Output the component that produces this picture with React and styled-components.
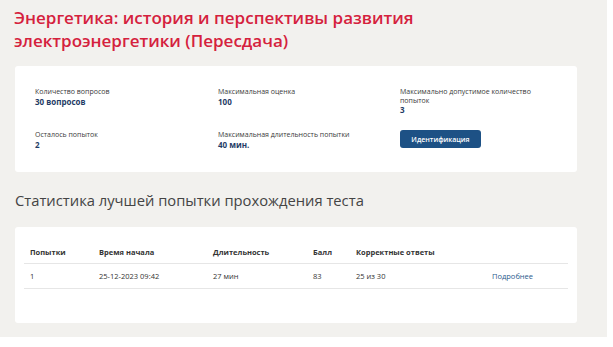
import React from "react";
import styled, { createGlobalStyle } from "styled-components";

const Global = createGlobalStyle`
  html, body { margin: 0; padding: 0; background: #ffffff; }
  body { font-family: "Open Sans", "Noto Sans", sans-serif; }
  * { box-sizing: border-box; }
`;

const Page = styled.div`
  width: 607px;
  height: 337px;
  background: #f2f1ee;
  padding: 6px 30px 0 15px;
  overflow: hidden;
`;

const Title = styled.h1`
  margin: 0 0 14px -1px;
  font-size: 17px;
  line-height: 23px;
  font-weight: 600;
  color: #d5213d;
`;

const Card = styled.section`
  background: #ffffff;
  border-radius: 3px;
  padding: ${(p) => p.$pad};
`;

const InfoGrid = styled.div`
  display: grid;
  grid-template-columns: 183px 182px 160px;
  row-gap: 17px;
  align-items: start;
`;

const Cell = styled.div`
  display: flex;
  flex-direction: column;
`;

const Label = styled.span`
  font-size: 7px;
  line-height: 8.5px;
  color: #3a3a3a;
  width: 150px;
`;

const Value = styled.span`
  font-size: 8px;
  line-height: 9px;
  font-weight: 700;
  color: #1f3c66;
`;

const Button = styled.button`
  align-self: flex-start;
  margin-top: -1px;
  height: 18px;
  width: 81px;
  padding: 0;
  border: none;
  border-radius: 3px;
  background: #1d5185;
  color: #ffffff;
  font-family: inherit;
  font-size: 7px;
  font-weight: 600;
  cursor: pointer;
`;

const SectionTitle = styled.h2`
  margin: 18px 0 17px 0;
  font-size: 14.75px;
  line-height: 20px;
  font-weight: 400;
  color: #444444;
`;

const Table = styled.table`
  width: 100%;
  border-collapse: collapse;
`;

const Th = styled.th`
  text-align: left;
  font-size: 7.5px;
  font-weight: 700;
  color: #333333;
  padding: 0 0 0 6px;
  height: 22px;
  border-bottom: 1.5px solid #e6e6e6;
  width: ${(p) => p.$w || "auto"};
`;

const Td = styled.td`
  font-size: 7.5px;
  color: #333333;
  padding: 0 0 0 6px;
  height: 25px;
  border-bottom: 1px solid #e6e6e6;
`;

const Link = styled.a`
  color: #2b5b8c;
  text-decoration: none;
`;

const info = [
  { label: "Количество вопросов", value: "30 вопросов" },
  { label: "Максимальная оценка", value: "100" },
  { label: "Максимально допустимое количество попыток", value: "3" },
  { label: "Осталось попыток", value: "2" },
  { label: "Максимальная длительность попытки", value: "40 мин." },
];

export default function App() {
  return (
    <>
      <Global />
      <Page>
        <Title>
          Энергетика: история и перспективы развития
          <br />
          электроэнергетики (Пересдача)
        </Title>
        <Card $pad="22px 20px 23px 20px">
          <InfoGrid>
            {info.map((it) => (
              <Cell key={it.label}>
                <Label>{it.label}</Label>
                <Value>{it.value}</Value>
              </Cell>
            ))}
            <Cell>
              <Button>Идентификация</Button>
            </Cell>
          </InfoGrid>
        </Card>
        <SectionTitle>Статистика лучшей попытки прохождения теста</SectionTitle>
        <Card $pad="15px 9px 34px 9px">
          <Table>
            <thead>
              <tr>
                <Th $w="69px">Попытки</Th>
                <Th $w="114px">Время начала</Th>
                <Th $w="100px">Длительность</Th>
                <Th $w="43px">Балл</Th>
                <Th $w="136px">Корректные ответы</Th>
                <Th />
              </tr>
            </thead>
            <tbody>
              <tr>
                <Td>1</Td>
                <Td>25-12-2023 09:42</Td>
                <Td>27 мин</Td>
                <Td>83</Td>
                <Td>25 из 30</Td>
                <Td>
                  <Link href="#">Подробнее</Link>
                </Td>
              </tr>
            </tbody>
          </Table>
        </Card>
      </Page>
    </>
  );
}
